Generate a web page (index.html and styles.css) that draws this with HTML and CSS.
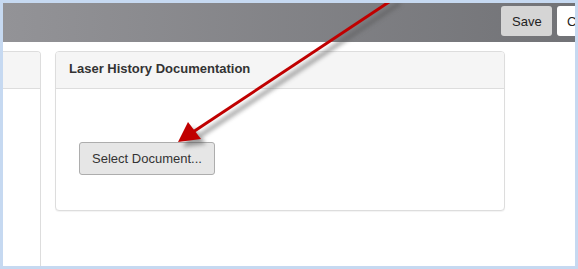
FILE: index.html
```html
<!DOCTYPE html>
<html>
<head>
<meta charset="utf-8">
<link rel="stylesheet" href="styles.css">
</head>
<body>
<div class="frame">
  <div class="topbar">
    <button class="btn-save">Save</button>
    <button class="btn-other">Cancel</button>
  </div>
  <div class="content">
    <div class="panel panel-left">
      <div class="panel-heading"></div>
    </div>
    <div class="panel panel-main">
      <div class="panel-heading"><span class="panel-title">Laser History Documentation</span></div>
      <div class="panel-body">
        <button class="btn-select">Select Document...</button>
      </div>
    </div>
  </div>
  <svg class="arrow" width="578" height="269" viewBox="0 0 578 269">
    <defs>
      <filter id="blur" x="-20%" y="-20%" width="140%" height="140%">
        <feGaussianBlur stdDeviation="2"/>
      </filter>
    </defs>
    <g transform="translate(5,5)" filter="url(#blur)" opacity="0.55">
      <line x1="395" y1="-2" x2="193" y2="132" stroke="#555" stroke-width="4"/>
      <polygon points="178,142 188,122 201,139" fill="#555"/>
    </g>
    <line x1="395" y1="-2" x2="193" y2="132" stroke="#c00000" stroke-width="3"/>
    <polygon points="178,142 188,122 201,139" fill="#c00000"/>
  </svg>
</div>
</body>
</html>
```
FILE: styles.css
```css
html, body {
  margin: 0;
  padding: 0;
}
body {
  font-family: "Liberation Sans", Arial, sans-serif;
  color: #333;
}
.frame {
  position: relative;
  width: 578px;
  height: 269px;
  box-sizing: border-box;
  border: 3px solid #c6d9f1;
  background: #fff;
  overflow: hidden;
}
.topbar {
  height: 39px;
  background: linear-gradient(to right, #939397, #6e6f73);
  display: flex;
  align-items: flex-start;
  justify-content: flex-end;
  padding-top: 3px;
  box-sizing: border-box;
  gap: 5px;
  margin-right: -60px;
}
.btn-save, .btn-other {
  font-family: "Liberation Sans", Arial, sans-serif;
  font-size: 13px;
  height: 30px;
  border: none;
  border-radius: 3px;
  padding: 0 11px;
  color: #222;
}
.btn-save {
  background: #d5d5d5;
  width: 51px;
}
.btn-other {
  background: #fff;
  width: 78px;
  text-align: left;
  padding-left: 10px;
}
.content {
  display: flex;
  align-items: flex-start;
  padding-top: 9px;
  gap: 14px;
}
.panel {
  border: 1px solid #ddd;
  border-radius: 4px;
  background: #fff;
  box-sizing: border-box;
}
.panel-left {
  width: 38px;
  height: 230px;
  border-left: none;
  border-top-left-radius: 0;
  border-bottom-left-radius: 0;
}
.panel-main {
  width: 450px;
  height: 160px;
  box-shadow: 0 1px 1px rgba(0,0,0,0.05);
}
.panel-heading {
  height: 36px;
  background: #f5f5f5;
  border-bottom: 1px solid #ddd;
  border-top-left-radius: 3px;
  border-top-right-radius: 3px;
  display: flex;
  align-items: center;
  padding-left: 13px;
}
.panel-left .panel-heading {
  border-top-left-radius: 0;
}
.panel-title {
  font-size: 13px;
  font-weight: bold;
  color: #333;
  margin-top: -3px;
}
.panel-body {
  padding: 53px 0 0 23px;
}
.btn-select {
  font-family: "Liberation Sans", Arial, sans-serif;
  font-size: 13px;
  color: #333;
  background: #e6e6e6;
  border: 1px solid #adadad;
  border-radius: 3px;
  height: 33px;
  width: 136px;
  padding: 0;
}
.arrow {
  position: absolute;
  left: -3px;
  top: -3px;
  pointer-events: none;
}
```
